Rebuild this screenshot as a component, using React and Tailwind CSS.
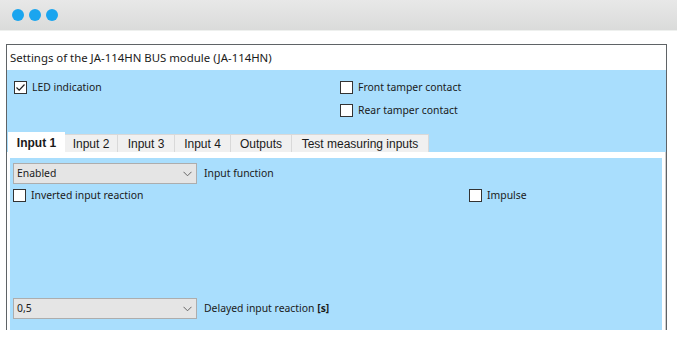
import React from "react";

const Check = ({ checked }) => (
  <span className="w-[13px] h-[13px] border border-[#333] bg-white flex items-center justify-center shrink-0">
    {checked && (
      <svg width="11" height="11" viewBox="0 0 11 11">
        <path d="M1.5 5.5 L4.2 8.2 L9.5 2.5" fill="none" stroke="#222" strokeWidth="1.2" />
      </svg>
    )}
  </span>
);

const CheckRow = ({ checked, label }) => (
  <div className="h-[13px] flex items-center gap-[5px] leading-[13px]">
    <Check checked={checked} />
    <span>{label}</span>
  </div>
);

const Select = ({ value }) => (
  <div className="w-[184px] h-[21px] bg-[#e5e5e5] border border-[#adadad] flex items-center justify-between pl-[3px] pr-[4px]">
    <span>{value}</span>
    <svg width="9" height="6" viewBox="0 0 9 6">
      <path d="M0.5 0.8 L4.5 4.8 L8.5 0.8" fill="none" stroke="#666" strokeWidth="1" />
    </svg>
  </div>
);

const tabs = [
  { name: "Input 1", w: "w-[57px]" },
  { name: "Input 2", w: "w-[53px]" },
  { name: "Input 3", w: "w-[57px]" },
  { name: "Input 4", w: "w-[56px]" },
  { name: "Outputs", w: "w-[61px]" },
  { name: "Test measuring inputs", w: "w-[137px]" },
];

export default function App() {
  return (
    <div className="w-[677px] h-[342px] bg-white overflow-hidden font-['Noto_Sans',sans-serif] text-[10.4px] text-[#1a1a1a]">
      {/* window bar */}
      <div className="h-[31px] bg-gradient-to-b from-[#e8e8e8] to-[#dadbda] border-b border-[#eef0ee] flex items-center gap-[5px] pl-[12px]">
        <span className="w-[12px] h-[12px] rounded-full bg-[#1aa5ef]" />
        <span className="w-[12px] h-[12px] rounded-full bg-[#1aa5ef]" />
        <span className="w-[12px] h-[12px] rounded-full bg-[#1aa5ef]" />
      </div>

      <div className="ml-[6px] mt-[13px] w-[661px] h-[286px] border-t border-x border-[#5f6366] flex flex-col">
        <div className="h-[25px] flex items-center pl-[3px] text-[11.4px]">
          Settings of the JA-114HN BUS module (JA-114HN)
        </div>

        <div className="flex-1 bg-[#a9defd] flex flex-col">
          {/* module options */}
          <div className="h-[62px] flex pt-[11px]">
            <div className="w-[333px] pl-[7px]">
              <CheckRow checked label="LED indication" />
            </div>
            <div className="flex flex-col gap-[10px]">
              <CheckRow label="Front tamper contact" />
              <CheckRow label="Rear tamper contact" />
            </div>
          </div>

          {/* tabs */}
          <div className="h-[20px] flex items-end pl-[1px] font-['Liberation_Sans',sans-serif] text-[12px]">
            {tabs.map((t, i) =>
              i === 0 ? (
                <div key={t.name} className={`${t.w} h-[21px] -mb-[1px] bg-white font-bold flex items-center justify-center`}>
                  {t.name}
                </div>
              ) : (
                <div key={t.name} className={`${t.w} h-[18px] bg-[#f0f0f0] border border-l-0 border-b-0 border-[#d9d9d9] flex items-center justify-center`}>
                  {t.name}
                </div>
              )
            )}
          </div>

          {/* tab panel */}
          <div className="flex-1 bg-white px-[3px] pt-[6px] border-r border-[#cfcfcf]">
            <div className="h-full bg-[#a9defd] flex flex-col pl-[3px] pt-[5px]">
              <div className="flex items-center gap-[7px]">
                <Select value="Enabled" />
                <span>Input function</span>
              </div>
              <div className="flex mt-[5px]">
                <div className="w-[456px]">
                  <CheckRow label="Inverted input reaction" />
                </div>
                <CheckRow label="Impulse" />
              </div>
              <div className="flex items-center gap-[7px] mt-[96px]">
                <Select value="0,5" />
                <span>
                  Delayed input reaction <b>[s]</b>
                </span>
              </div>
            </div>
          </div>
        </div>
      </div>
    </div>
  );
}
